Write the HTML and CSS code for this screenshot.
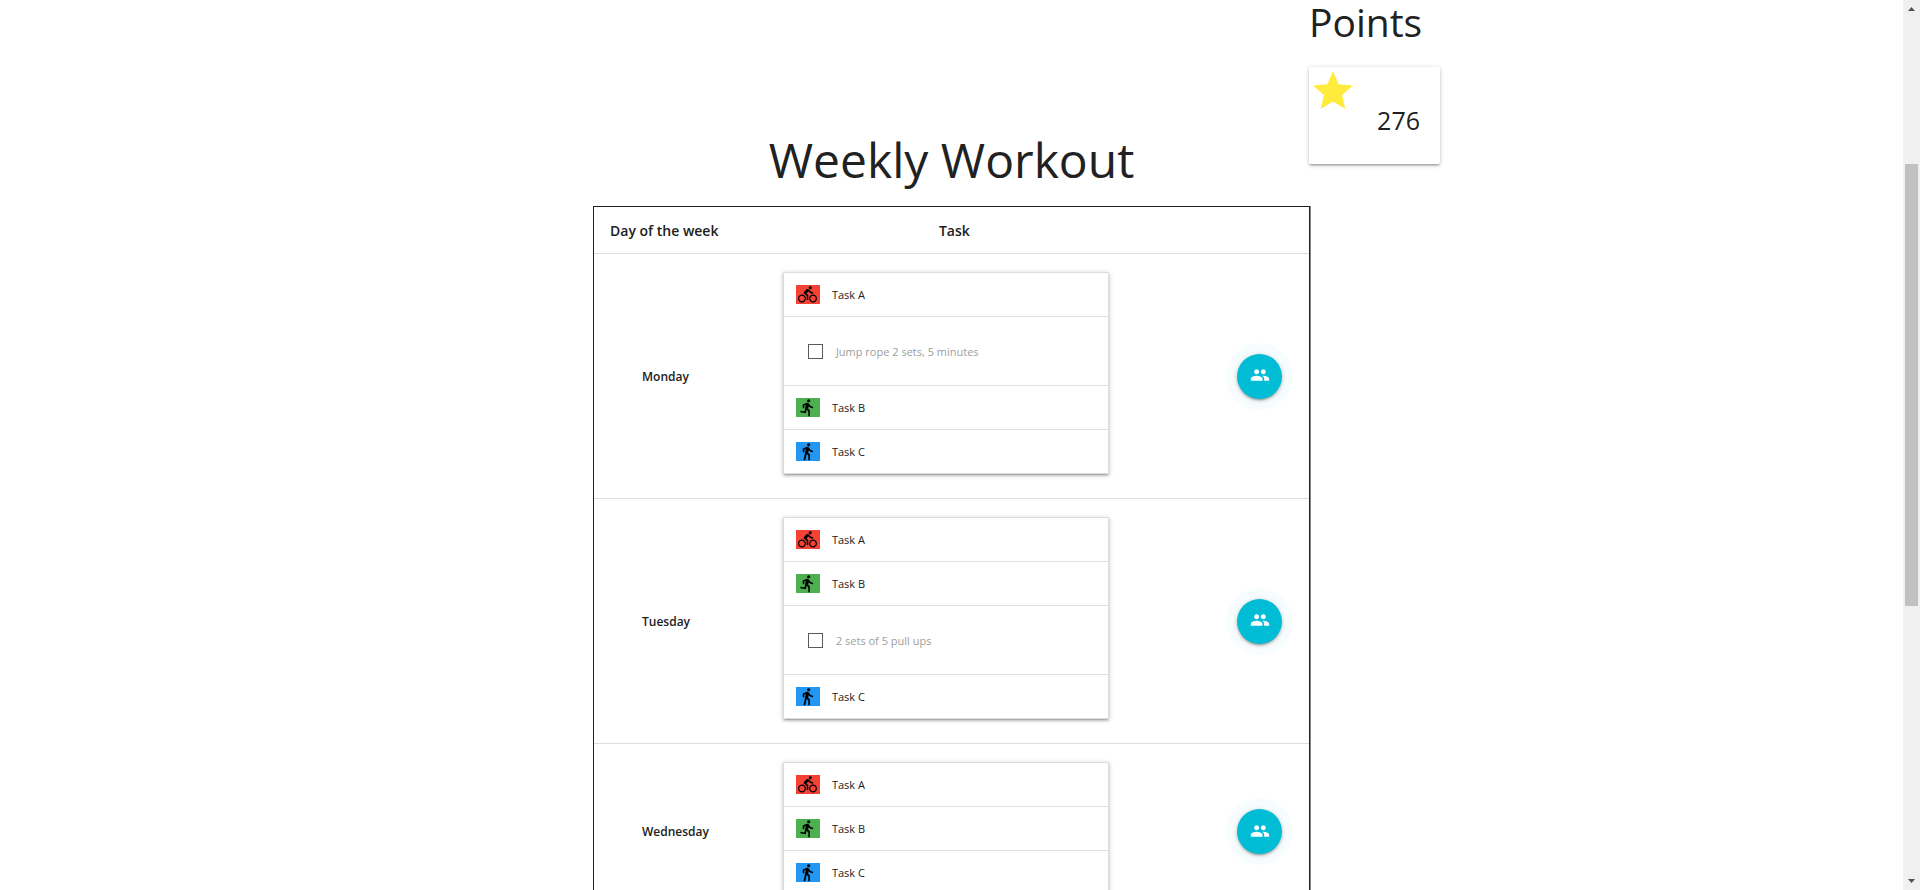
FILE: index.html
```
<!DOCTYPE html>
<html lang="en">
<head>
<meta charset="utf-8">
<title>Weekly Workout</title>
<link rel="stylesheet" href="styles.css">
</head>
<body>
<svg class="sprite" aria-hidden="true">
  <symbol id="bike" viewBox="0 0 24 24"><path d="M15.5 5.5c1.1 0 2-.9 2-2s-.9-2-2-2-2 .9-2 2 .9 2 2 2zM5 12c-2.8 0-5 2.2-5 5s2.2 5 5 5 5-2.2 5-5-2.2-5-5-5zm0 8.500c-1.900 0-3.500-1.600-3.500-3.500s1.600-3.500 3.500-3.500 3.500 1.600 3.500 3.500-1.600 3.500-3.500 3.500zm5.800-10l2.400-2.400.8.8c1.300 1.300 3 2.100 5.100 2.100V9c-1.500 0-2.700-.6-3.600-1.500l-1.900-1.900c-.5-.4-1-.6-1.600-.6s-1.100.2-1.400.6L7.800 8.400c-.4.4-.6.9-.6 1.400 0 .6.2 1.100.6 1.400L11 14v5h2v-6.200l-2.200-2.300zM19 12c-2.800 0-5 2.200-5 5s2.200 5 5 5 5-2.200 5-5-2.200-5-5-5zm0 8.500c-1.900 0-3.500-1.600-3.500-3.500s1.600-3.500 3.500-3.500 3.500 1.600 3.500 3.500-1.600 3.500-3.500 3.500z"/></symbol>
  <symbol id="run" viewBox="0 0 24 24"><path d="M13.490 5.480c1.100 0 2-.9 2-2s-.9-2-2-2-2 .9-2 2 .9 2 2 2zm-3.600 13.900l1-4.400 2.100 2v6h2v-7.500l-2.100-2 .6-3c1.300 1.500 3.300 2.500 5.500 2.500v-2c-1.900 0-3.500-1-4.300-2.400l-1-1.600c-.4-.6-1-1-1.700-1-.3 0-.5.1-.8.1l-5.200 2.200v4.700h2v-3.400l1.800-.7-1.600 8.100-4.900-1-.4 2 7 1.400z"/></symbol>
  <symbol id="walk" viewBox="0 0 24 24"><path d="M13.500 5.500c1.100 0 2-.9 2-2s-.9-2-2-2-2 .9-2 2 .9 2 2 2zM9.800 8.900L7 23h2.100l1.800-8 2.100 2v6h2v-7.500l-2.100-2 .6-3C14.800 12 16.800 13 19 13v-2c-1.900 0-3.500-1-4.300-2.400l-1-1.600c-.4-.6-1-1-1.700-1-.3 0-.5.1-.8.1L6 8.300V13h2V9.600l1.800-.7"/></symbol>
  <symbol id="people" viewBox="0 0 24 24"><path d="M16 11c1.660 0 2.990-1.340 2.990-3S17.660 5 16 5c-1.660 0-3 1.340-3 3s1.340 3 3 3zm-8 0c1.660 0 2.990-1.340 2.990-3S9.660 5 8 5C6.340 5 5 6.340 5 8s1.340 3 3 3zm0 2c-2.330 0-7 1.170-7 3.500V19h14v-2.500c0-2.330-4.670-3.500-7-3.500zm8 0c-.29 0-.62.02-.97.05 1.160.84 1.970 1.970 1.970 3.450V19h6v-2.500c0-2.330-4.670-3.500-7-3.500z"/></symbol>
  <symbol id="star" viewBox="0 0 24 24"><path d="M12 17.270L18.180 21l-1.640-7.030L22 9.240l-7.190-.61L12 2 9.190 8.630 2 9.240l5.460 4.730L5.820 21z"/></symbol>
</svg>
<div class="page">
  <main class="layout">
    <section class="workout">
      <h1 class="title">Weekly Workout</h1>
      <table class="plan">
        <colgroup><col class="col-day"><col class="col-task"><col></colgroup>
        <thead>
          <tr><th class="head-day" scope="col">Day of the week</th><th class="head-task" scope="col">Task</th><td></td></tr>
        </thead>
        <tbody>
          <tr>
            <th class="day" scope="row">Monday</th>
            <td class="tasks">
              <ul class="card">
                <li><button class="task"><span class="tile red"><svg><use href="#bike"/></svg></span>Task A</button>
                  <label class="detail"><input type="checkbox" class="check">Jump rope 2 sets, 5 minutes</label></li>
                <li><button class="task"><span class="tile green"><svg><use href="#run"/></svg></span>Task B</button></li>
                <li><button class="task"><span class="tile blue"><svg><use href="#walk"/></svg></span>Task C</button></li>
              </ul>
            </td>
            <td class="action"><button class="fab" aria-label="Monday group"><svg><use href="#people"/></svg></button></td>
          </tr>
          <tr>
            <th class="day" scope="row">Tuesday</th>
            <td class="tasks">
              <ul class="card">
                <li><button class="task"><span class="tile red"><svg><use href="#bike"/></svg></span>Task A</button></li>
                <li><button class="task"><span class="tile green"><svg><use href="#run"/></svg></span>Task B</button>
                  <label class="detail"><input type="checkbox" class="check">2 sets of 5 pull ups</label></li>
                <li><button class="task"><span class="tile blue"><svg><use href="#walk"/></svg></span>Task C</button></li>
              </ul>
            </td>
            <td class="action"><button class="fab" aria-label="Tuesday group"><svg><use href="#people"/></svg></button></td>
          </tr>
          <tr>
            <th class="day" scope="row">Wednesday</th>
            <td class="tasks">
              <ul class="card">
                <li><button class="task"><span class="tile red"><svg><use href="#bike"/></svg></span>Task A</button></li>
                <li><button class="task"><span class="tile green"><svg><use href="#run"/></svg></span>Task B</button></li>
                <li><button class="task"><span class="tile blue"><svg><use href="#walk"/></svg></span>Task C</button></li>
              </ul>
            </td>
            <td class="action"><button class="fab" aria-label="Wednesday group"><svg><use href="#people"/></svg></button></td>
          </tr>
        </tbody>
      </table>
    </section>
    <aside class="points">
      <h2 class="points-title">Points</h2>
      <div class="points-card"><svg class="star"><use href="#star"/></svg><span class="score">276</span></div>
    </aside>
  </main>
  <div class="scrollbar" aria-hidden="true">
    <svg class="arrow" viewBox="0 0 17 17"><path d="M5 11h7L8.500 7z"/></svg>
    <div class="track"><div class="thumb"></div></div>
    <svg class="arrow" viewBox="0 0 17 17"><path d="M5 6h7L8.500 10z"/></svg>
  </div>
</div>
</body>
</html>
```
FILE: styles.css
```
* { box-sizing: border-box; }

body {
  margin: 0;
  background: #fff;
  color: #212121;
  font-family: "Open Sans", "Noto Sans", sans-serif;
  font-size: 11px;
}

svg { display: block; fill: currentColor; }
button { font: inherit; color: inherit; border: 0; background: none; cursor: pointer; }
h1, h2 { margin: 0; font-weight: 400; }
.sprite { display: none; }

.page { display: flex; height: 100vh; overflow: hidden; }

.layout {
  flex: 1;
  display: grid;
  grid-template-columns: 1fr minmax(0, 717px) 1fr;
  align-items: start;
}

.workout { grid-column: 2; padding-top: 132px; }

.title {
  margin-bottom: 18px;
  font-size: 48px;
  line-height: 56px;
  text-align: center;
}

.plan {
  width: 100%;
  table-layout: fixed;
  border-collapse: separate;
  border-spacing: 0;
  border: 1px solid #212121;
  box-shadow: 1px 0 0 #888;
}

.col-day { width: 26%; }
.col-task { width: 49%; }
.plan th, .plan td { padding: 0; text-align: left; border-bottom: 1px solid #ddd; }
.plan thead th, .plan thead td { height: 47px; font-size: 14px; font-weight: 600; }
.plan .head-day { padding-left: 16px; }
.plan .head-task { padding-left: 159px; }
.plan .day { padding-left: 48px; font-size: 12px; font-weight: 600; }
.plan .tasks { padding: 18px 21px 24px 3px; }
.plan .action { padding-right: 27px; }

.card {
  margin: 0;
  padding: 0;
  list-style: none;
  background: #fff;
  border: 1px solid #ddd;
  border-bottom: 0;
  box-shadow: 0 2px 2px 0 rgba(0, 0, 0, .14), 0 3px 1px -2px rgba(0, 0, 0, .12), 0 1px 5px 0 rgba(0, 0, 0, .2);
}

.task {
  display: flex;
  align-items: center;
  gap: 12px;
  width: 100%;
  height: 44px;
  padding: 0 12px;
  border-bottom: 1px solid #ddd;
}

.tile { display: flex; justify-content: center; width: 24px; height: 19px; color: #000; }
.tile svg { width: 19px; height: 19px; }
.red { background: #f44336; }
.green { background: #4caf50; }
.blue { background: #2196f3; }

.detail {
  display: flex;
  align-items: center;
  gap: 13px;
  height: 69px;
  padding-left: 24px;
  color: #9e9e9e;
  border-bottom: 1px solid #ddd;
}

.check {
  appearance: none;
  width: 15px;
  height: 15px;
  margin: 0;
  border: 1px solid #5a5a5a;
}

.fab {
  display: grid;
  place-items: center;
  width: 45px;
  height: 45px;
  margin-left: auto;
  padding: 0 0 2px;
  color: #fff;
  background: #00bcd4;
  border-radius: 50%;
  box-shadow: 0 2px 2px 0 rgba(0, 0, 0, .14), 0 3px 1px -2px rgba(0, 0, 0, .12), 0 1px 5px 0 rgba(0, 0, 0, .2), 0 0 0 11px rgba(0, 188, 212, .03);
}

.fab svg { width: 20px; height: 20px; }

.points { grid-column: 3; justify-self: start; margin-left: -1px; }
.points-title { margin-bottom: 23px; font-size: 39px; line-height: 44px; }

.points-card {
  display: flex;
  align-items: flex-start;
  justify-content: space-between;
  width: 131px;
  height: 97px;
  padding-right: 20px;
  border-radius: 2px;
  box-shadow: 0 2px 2px 0 rgba(0, 0, 0, .14), 0 3px 1px -2px rgba(0, 0, 0, .12), 0 1px 5px 0 rgba(0, 0, 0, .2);
}

.star { width: 48px; height: 48px; color: #ffeb3b; }
.score { align-self: center; padding-top: 8px; font-size: 25px; line-height: 32px; }

.scrollbar { display: flex; flex-direction: column; width: 17px; background: #f0f0f0; }
.arrow { width: 17px; height: 17px; color: #505050; }
.track { flex: 1; padding: 0 2px; }
.track::before { content: ""; display: block; height: 17.200%; }
.thumb { height: 51.600%; background: #c1c1c1; }
```
